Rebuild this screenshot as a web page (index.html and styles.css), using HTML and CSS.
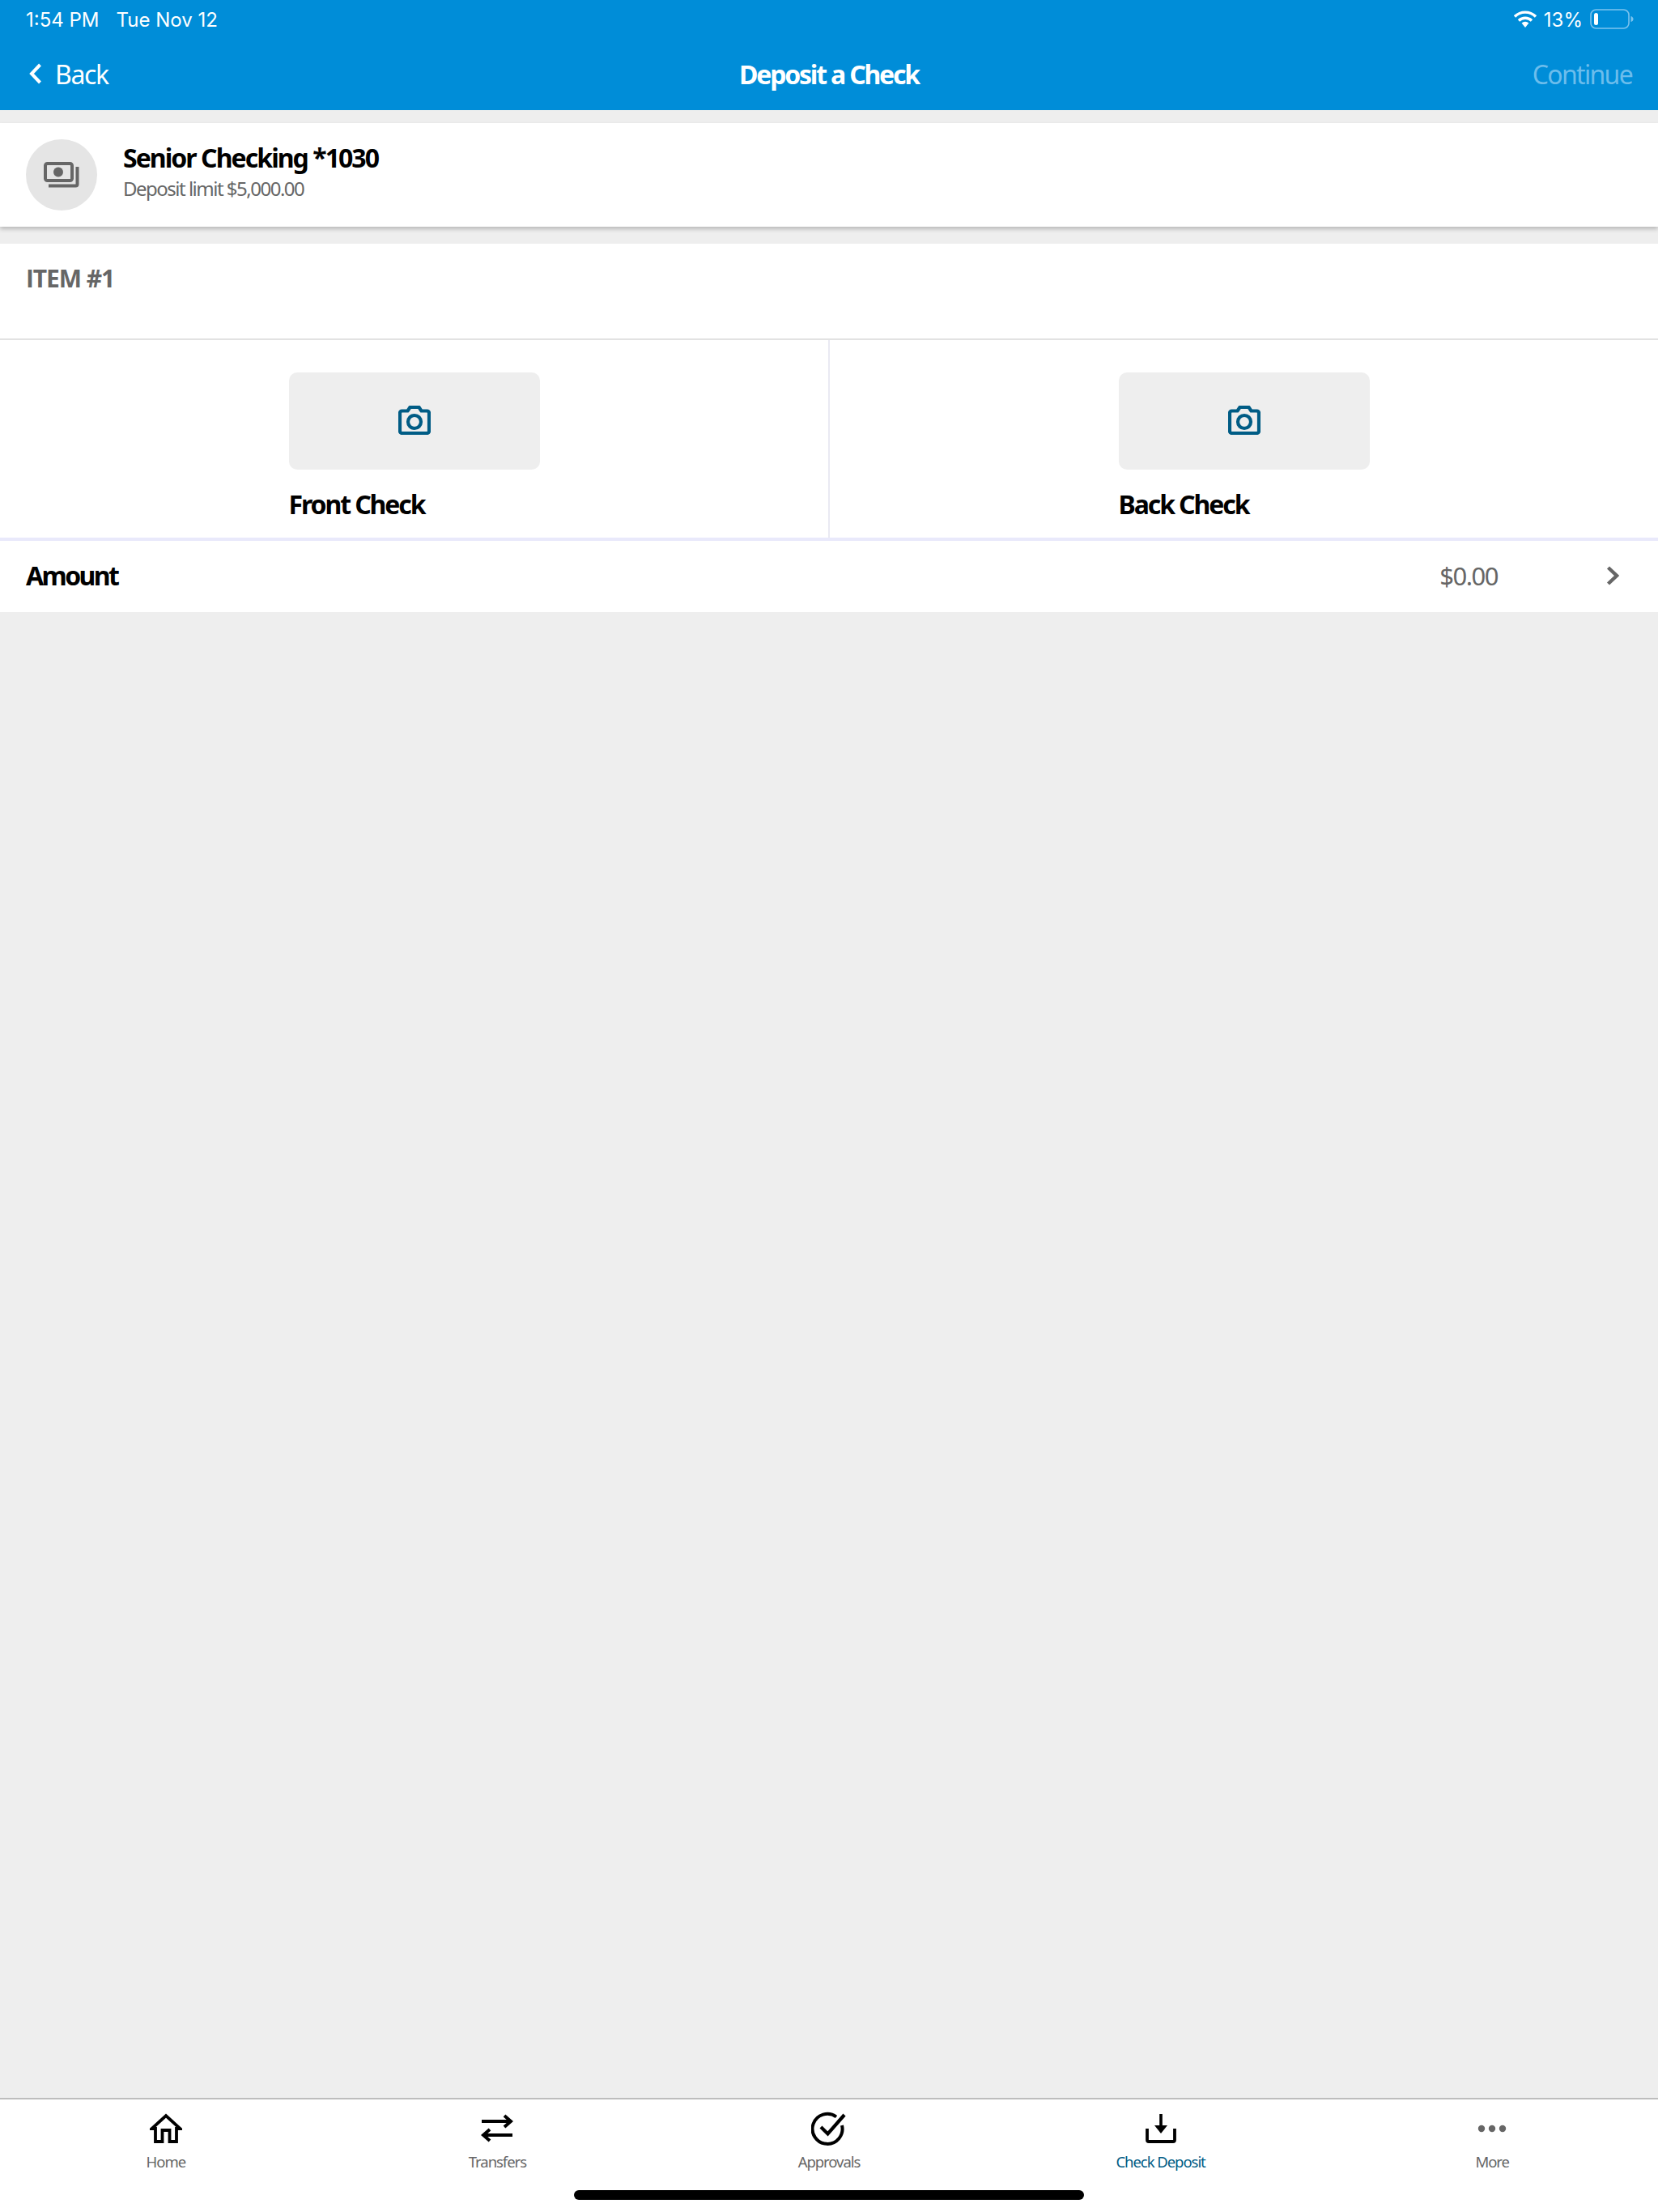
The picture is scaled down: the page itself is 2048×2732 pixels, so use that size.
FILE: index.html
```html
<!DOCTYPE html>
<html lang="en">
<head>
  <meta charset="UTF-8">
  <title>Deposit a Check</title>
  <link rel="stylesheet" href="styles.css">
</head>
<body>
  <div class="app">
    <header class="top">
      <div class="status">
        <div class="status-left"><span>1:54 PM</span><span>Tue Nov 12</span></div>
        <div class="status-right">
          <svg class="wifi" width="28" height="22" viewBox="0 0 28 22"><path d="M1 7.5a18.5 18.5 0 0 1 26 0" fill="none" stroke="#fff" stroke-width="3.4"/><path d="M6 12.5a11.5 11.5 0 0 1 16 0" fill="none" stroke="#fff" stroke-width="3.4"/><path d="M9.6 15.6a6.4 6.4 0 0 1 8.8 0L14 21z" fill="#fff"/></svg>
          <span>13%</span>
          <svg class="battery" width="54" height="26" viewBox="0 0 54 26"><rect x="1" y="1" width="47" height="23" rx="6.5" fill="none" stroke="#7cc3ee" stroke-width="1.6"/><rect x="5" y="5" width="5" height="15" rx="2.5" fill="#fff"/><path d="M50.5 9c2 .6 3 2 3 3.5s-1 3-3 3.500z" fill="#7cc3ee"/></svg>
        </div>
      </div>
      <nav class="titlebar">
        <a class="back" href="#">
          <svg width="16" height="26" viewBox="0 0 16 26"><path d="M13.500 2 3 13l10.500 11" fill="none" stroke="#fff" stroke-width="4"/></svg>
          Back
        </a>
        <h1>Deposit a Check</h1>
        <a class="continue" href="#">Continue</a>
      </nav>
    </header>

    <section class="account">
      <div class="account-icon">
        <svg width="44" height="32" viewBox="0 0 44 32"><rect x="2" y="2" width="33" height="21" rx="2.500" fill="none" stroke="#666" stroke-width="4"/><circle cx="18" cy="12.500" r="6" fill="#666"/><path d="M41.500 6v21.500a2 2 0 0 1-2 2H6" fill="none" stroke="#666" stroke-width="4"/></svg>
      </div>
      <div>
        <div class="account-name">Senior Checking *1030</div>
        <div class="account-limit">Deposit limit $5,000.00</div>
      </div>
    </section>

    <section class="item">
      <h2 class="item-title">ITEM #1</h2>
      <div class="captures">
        <div class="capture">
          <div class="capture-inner">
            <div class="capture-box">
              <svg width="40" height="36" viewBox="0 0 40 36"><path d="M4.500 6.500h7l3-4.500h11l3 4.500h7A2.500 2.500 0 0 1 38 9v22.500a2.500 2.500 0 0 1-2.500 2.500h-31A2.500 2.500 0 0 1 2 31.500V9a2.500 2.500 0 0 1 2.500-2.500z" fill="none" stroke="#005c85" stroke-width="4.200" stroke-linejoin="round"/><circle cx="20" cy="20" r="8" fill="none" stroke="#005c85" stroke-width="4.200"/></svg>
            </div>
            <div class="capture-label">Front Check</div>
          </div>
        </div>
        <div class="capture">
          <div class="capture-inner">
            <div class="capture-box">
              <svg width="40" height="36" viewBox="0 0 40 36"><path d="M4.500 6.500h7l3-4.500h11l3 4.500h7A2.500 2.500 0 0 1 38 9v22.500a2.500 2.500 0 0 1-2.500 2.500h-31A2.500 2.500 0 0 1 2 31.500V9a2.500 2.500 0 0 1 2.500-2.500z" fill="none" stroke="#005c85" stroke-width="4.200" stroke-linejoin="round"/><circle cx="20" cy="20" r="8" fill="none" stroke="#005c85" stroke-width="4.200"/></svg>
            </div>
            <div class="capture-label">Back Check</div>
          </div>
        </div>
      </div>
      <div class="amount">
        <span class="amount-label">Amount</span>
        <span class="amount-value">$0.00</span>
        <svg width="16" height="24" viewBox="0 0 16 24"><path d="M2.500 2 13 12 2.500 22" fill="none" stroke="#666" stroke-width="4.400"/></svg>
      </div>
    </section>

    <div class="spacer"></div>

    <footer class="tabs">
      <div class="tab-row">
        <a class="tab" href="#">
          <svg width="40" height="36" viewBox="0 0 40 36"><path d="M7 34V18H2.500L20 2l17.500 16H33v16h-8.500V20h-9v14z" fill="none" stroke="#000" stroke-width="3.800" stroke-linejoin="miter"/></svg>
          <span>Home</span>
        </a>
        <a class="tab" href="#">
          <svg width="40" height="36" viewBox="0 0 40 36"><path d="M1 9h36M29 2l8 7-8 7" fill="none" stroke="#000" stroke-width="4"/><path d="M39 26H3M11 19l-8 7 8 7" fill="none" stroke="#000" stroke-width="4"/></svg>
          <span>Transfers</span>
        </a>
        <a class="tab" href="#">
          <svg width="44" height="42" viewBox="0 0 44 42"><path d="M38 17a18.500 18.500 0 1 1-7-10.500" fill="none" stroke="#000" stroke-width="4"/><path d="M12 19l8.500 8.500L41 4" fill="none" stroke="#000" stroke-width="4.200"/></svg>
          <span>Approvals</span>
        </a>
        <a class="tab active" href="#">
          <svg width="38" height="36" viewBox="0 0 38 36"><path d="M19 0v21" stroke="#000" stroke-width="3.600"/><path d="M11 14h16l-8 10z" fill="#000"/><path d="M2 18v14a2 2 0 0 0 2 2h30a2 2 0 0 0 2-2V18" fill="none" stroke="#000" stroke-width="3.800"/></svg>
          <span>Check Deposit</span>
        </a>
        <a class="tab" href="#">
          <svg width="36" height="36" viewBox="0 0 36 36"><circle cx="5" cy="18" r="4.200" fill="#666"/><circle cx="18" cy="18" r="4.200" fill="#666"/><circle cx="31" cy="18" r="4.200" fill="#666"/></svg>
          <span>More</span>
        </a>
      </div>
      <div class="home-bar"></div>
    </footer>
  </div>
</body>
</html>
```

FILE: styles.css
```css
* { box-sizing: border-box; }
body { margin: 0; background: #eeeeee; font-family: 'Noto Sans', 'Open Sans', sans-serif; color: #000; }
a { text-decoration: none; color: inherit; }
h1, h2 { margin: 0; }

.app { width: 2048px; height: 2732px; display: flex; flex-direction: column; overflow: hidden; }

.top { background: #008dd8; color: white; height: 136px; flex: none; }
.status { height: 48px; padding: 0 32px; display: flex; justify-content: space-between; align-items: center; font-family: 'Inter', sans-serif; font-size: 24px; }
.status-left { display: flex; gap: 21px; }
.status-right { display: flex; align-items: center; gap: 9px; margin-right: -2px; }
.titlebar { height: 88px; padding: 0 32px 2px; display: flex; align-items: center; justify-content: space-between; position: relative; }
.back { display: flex; align-items: center; gap: 16px; font-size: 32px; letter-spacing: -1.4px; margin-left: 4px; }
.titlebar h1 { position: absolute; left: 0; right: 0; text-align: center; font-size: 32px; font-weight: 700; letter-spacing: -2.2px; }
.continue { color: #6cbdec; font-size: 32px; letter-spacing: -1.7px; position: relative; }

.account { background: white; margin-top: 16px; height: 128px; padding: 0 32px; display: flex; align-items: center; gap: 32px; box-shadow: 0 3px 5px rgba(0,0,0,0.22); position: relative; flex: none; }
.account-icon { width: 88px; height: 88px; border-radius: 50%; background: #e5e5e5; display: flex; align-items: center; justify-content: center; }
.account-name { font-size: 32px; font-weight: 700; letter-spacing: -1.95px; line-height: 40px; margin-top: -9px; }
.account-limit { font-size: 24px; color: #666; letter-spacing: -1.5px; line-height: 32px; margin-top: 2px; }

.item { background: white; margin-top: 21px; flex: none; }
.item-title { height: 119px; padding: 23px 32px 0; font-family: 'Open Sans', sans-serif; font-size: 30px; line-height: 40px; font-weight: 700; color: #666; letter-spacing: -1.1px; border-bottom: 2px solid #e2e2e2; }
.captures { display: grid; grid-template-columns: 1025px 1fr; height: 248px; border-bottom: 4px solid #e9e9fb; }
.capture { display: flex; justify-content: center; padding-top: 40px; }
.capture:first-child { border-right: 2px solid #e9e9f2; }
.capture-inner { width: 310px; }
.capture-box { height: 120px; padding-bottom: 2px; background: #eeeeee; border-radius: 10px; display: flex; align-items: center; justify-content: center; }
.capture-label { margin-top: 22px; font-size: 32px; line-height: 42px; font-weight: 700; letter-spacing: -2.1px; }
.amount { height: 88px; padding: 0 48px 3px 32px; display: flex; align-items: center; }
.amount-label { font-size: 32px; font-weight: 700; letter-spacing: -2.6px; }
.amount-value { margin-left: auto; margin-right: 150px; font-size: 31px; color: #666; letter-spacing: -1.5px; }
.amount-value + svg { margin-left: -16px; }

.spacer { flex: 1; }

.tabs { background: white; border-top: 2px solid #bdbdbd; height: 141px; flex: none; position: relative; }
.tab-row { display: grid; grid-template-columns: repeat(5, 1fr); }
.tab { height: 92px; padding-top: 15px; display: flex; flex-direction: column; align-items: center; justify-content: flex-start; font-size: 18.5px; line-height: 26px; color: #666; letter-spacing: -1.05px; }
.tab svg { display: block; margin-bottom: 7px; height: 42px; }
.tab.active { color: #005c85; }
.home-bar { width: 630px; height: 12px; border-radius: 6px; background: #000; position: absolute; left: 709px; top: 112px; }
```
